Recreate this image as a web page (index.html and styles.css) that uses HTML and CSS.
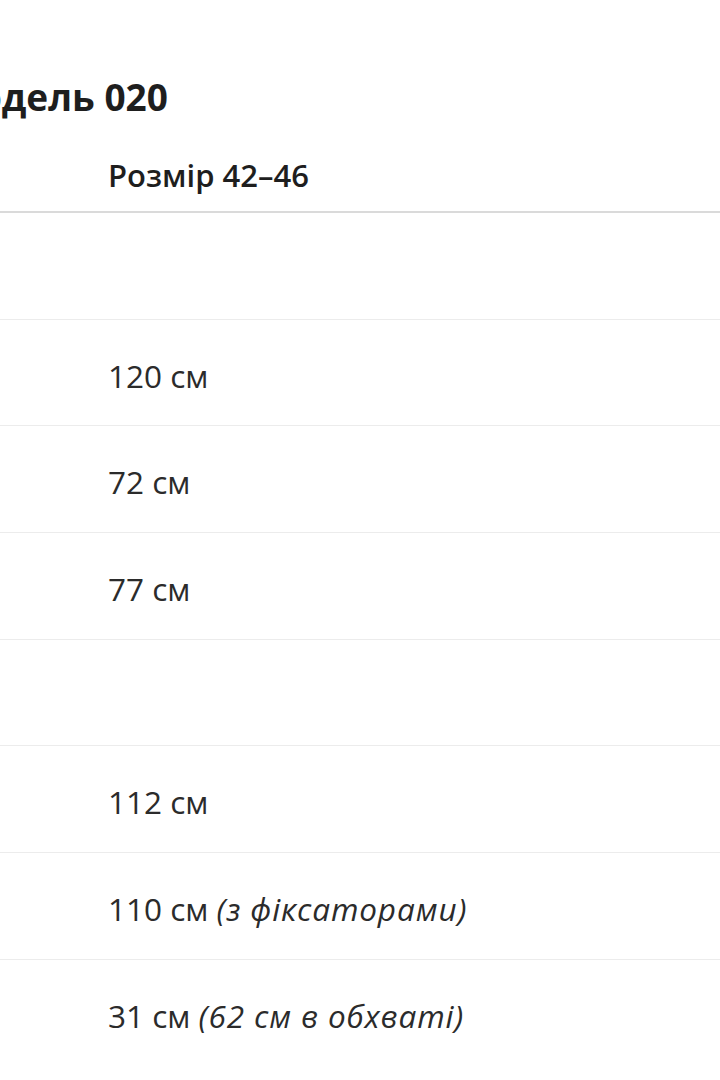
FILE: index.html
```html
<!DOCTYPE html>
<html lang="uk">
<head>
<meta charset="utf-8">
<link rel="stylesheet" href="styles.css">
</head>
<body>
<div class="sheet">
  <h2 class="title">Модель 020</h2>
  <div class="table">
    <div class="row head"><div class="label"></div><div class="value">Розмір 42–46</div></div>
    <div class="row"><div class="label"></div><div class="value"></div></div>
    <div class="row"><div class="label"></div><div class="value">120 см</div></div>
    <div class="row"><div class="label"></div><div class="value">72 см</div></div>
    <div class="row"><div class="label"></div><div class="value">77 см</div></div>
    <div class="row"><div class="label"></div><div class="value"></div></div>
    <div class="row"><div class="label"></div><div class="value">112 см</div></div>
    <div class="row"><div class="label"></div><div class="value">110 см <em>(з фіксаторами)</em></div></div>
    <div class="row"><div class="label"></div><div class="value">31 см <em>(62 см в обхваті)</em></div></div>
  </div>
</div>
</body>
</html>
```
FILE: styles.css
```css
html, body {
  margin: 0;
  padding: 0;
  background: #fff;
  overflow: hidden;
}
body {
  font-family: "Open Sans", "Noto Sans", sans-serif;
  color: #2b2b2b;
}
.sheet {
  margin-left: -56px;
  width: 776px;
}
.title {
  margin: 0;
  padding-top: 72px;
  font-size: 37px;
  line-height: 50px;
  font-weight: 700;
  color: #1e1e1e;
}
.table {
  margin-top: 16px;
}
.row {
  display: grid;
  grid-template-columns: 140px 1fr;
  align-items: center;
  box-sizing: border-box;
  height: 106.7px;
  border-bottom: 1px solid #ececec;
}
.row:last-child {
  border-bottom: none;
}
.row.head {
  height: 75px;
  border-bottom: 2px solid #dadada;
}
.value {
  padding-left: 24px;
  font-size: 31.5px;
  line-height: 40px;
  padding-top: 6px;
  white-space: nowrap;
}
.head .value {
  font-weight: 600;
  font-size: 31px;
  color: #1e1e1e;
  padding-top: 0;
}
.value em {
  font-style: italic;
  letter-spacing: 0.9px;
}
```
